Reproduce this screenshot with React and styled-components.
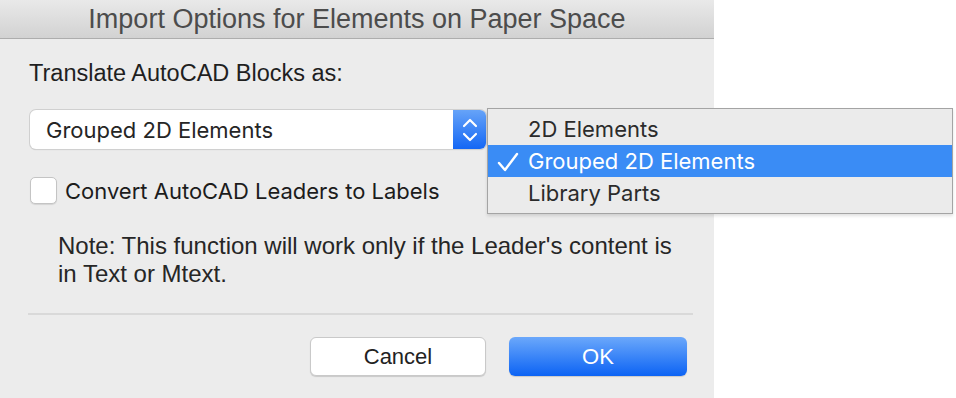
import styled, { createGlobalStyle } from "styled-components";

const GlobalStyle = createGlobalStyle`
  html, body {
    margin: 0;
    padding: 0;
    background: #ffffff;
  }
  body {
    width: 956px;
    height: 398px;
    overflow: hidden;
  }
`

const Dialog = styled.div`
  width: 714px;
  height: 398px;
  background: #ececec;
  display: flex;
  flex-direction: column;
  font-family: "Liberation Sans", Arial, sans-serif;
  color: #1f1f1f;
`
const TitleBar = styled.div`
  height: 38px;
  border-bottom: 1px solid #adadad;
  background: linear-gradient(180deg, #e9e9e9 0%, #d2d2d2 100%);
  display: flex;
  align-items: center;
  justify-content: center;
  font-size: 27px;
  color: #4c4c4c;
`
const Body = styled.div`
  padding: 21px 21px 0 29px;
  display: flex;
  flex-direction: column;
`
const Label = styled.div`
  font-size: 23.5px;
  line-height: 26px;
`
const SelectRow = styled.div`
  position: relative;
  margin-top: 24px;
  width: 457px;
`
const Select = styled.div`
  height: 39px;
  margin-left: 1px;
  display: flex;
  border-radius: 6px;
  background: #fff;
  box-shadow: 0 0 0 1px #d0d0d0, 0 1px 1px rgba(0,0,0,0.18);
  overflow: hidden;
`
const SelectText = styled.div`
  flex: 1;
  padding-left: 16px;
  display: flex;
  align-items: center;
  font-family: Inter, "Liberation Sans", sans-serif;
  font-size: 22px;
  color: #252525;
`
const Stepper = styled.div`
  width: 33px;
  background: linear-gradient(180deg, #66a3f8 0%, #1467f5 100%);
  display: flex;
  align-items: center;
  justify-content: center;
`
const Menu = styled.div`
  position: absolute;
  left: 458px;
  top: -2px;
  width: 464px;
  padding: 4px 0;
  background: #ebebeb;
  border: 1px solid #a4a4a4;
  box-shadow: 0 2px 3px rgba(0,0,0,0.12);
  font-family: Inter, "Liberation Sans", sans-serif;
  font-size: 22px;
`
const MenuItem = styled.div`
  height: 32px;
  display: flex;
  align-items: center;
  padding-left: 40px;
  position: relative;
  color: ${p => (p.$active ? "#ffffff" : "#2b2b2b")};
  background: ${p => (p.$active ? "#3a8cf5" : "transparent")};
`
const Check = styled.svg`
  position: absolute;
  left: 9px;
  top: 7px;
`
const CheckRow = styled.div`
  margin-top: 28px;
  display: flex;
  align-items: center;
  gap: 8px;
  margin-left: 1px;
`
const Box = styled.div`
  width: 27px;
  height: 27px;
  box-sizing: border-box;
  border-radius: 5px;
  background: #fff;
  border: 1px solid #c4c4c4;
  box-shadow: 0 1px 1px rgba(0,0,0,0.1);
`
const CheckLabel = styled.span`
  font-family: Inter, "Liberation Sans", sans-serif;
  font-size: 22px;
  color: #1c1c1c;
`
const Note = styled.p`
  margin: 28px 0 0 29px;
  font-size: 24px;
  line-height: 28px;
  color: #262626;
`
const Separator = styled.hr`
  margin: 25px 0 0 -1px;
  width: 665px;
  border: 0;
  height: 2px;
  background: #d9d9d9;
`
const Buttons = styled.div`
  margin-top: 22px;
  width: 658px;
  display: flex;
  justify-content: flex-end;
  gap: 23px;
`
const Button = styled.button`
  width: ${p => (p.$primary ? "178px" : "176px")};
  height: 39px;
  border-radius: 6px;
  font-family: "Liberation Sans", Arial, sans-serif;
  font-size: 22px;
  border: ${p => (p.$primary ? "none" : "1px solid #c9c9c9")};
  color: ${p => (p.$primary ? "#ffffff" : "#222222")};
  background: ${p => (p.$primary ? "linear-gradient(180deg, #6ba8fb 0%, #0c63f4 100%)" : "#ffffff")};
  box-shadow: 0 1px 1px rgba(0,0,0,0.15);
`

function Chevrons() {
  return (
    <svg width="18" height="26" viewBox="0 0 18 26">
      <polyline points="3,9 9,3 15,9" fill="none" stroke="#fff" strokeWidth="2.2" strokeLinecap="round" strokeLinejoin="round" />
      <polyline points="3,17 9,23 15,17" fill="none" stroke="#fff" strokeWidth="2.2" strokeLinecap="round" strokeLinejoin="round" />
    </svg>
  )
}

export default function App() {
  const opcoes = ["2D Elements", "Grouped 2D Elements", "Library Parts"]
  return (
    <>
      <GlobalStyle />
      <Dialog>
        <TitleBar>Import Options for Elements on Paper Space</TitleBar>
        <Body>
          <Label>Translate AutoCAD Blocks as:</Label>
          <SelectRow>
            <Select>
              <SelectText>Grouped 2D Elements</SelectText>
              <Stepper><Chevrons /></Stepper>
            </Select>
            <Menu>
              {opcoes.map(op => (
                <MenuItem key={op} $active={op === "Grouped 2D Elements"}>
                  {op === "Grouped 2D Elements" && (
                    <Check width="22" height="20" viewBox="0 0 22 20">
                      <polyline points="2,11 8,18 20,2" fill="none" stroke="#fff" strokeWidth="2.4" strokeLinecap="round" strokeLinejoin="round" />
                    </Check>
                  )}
                  {op}
                </MenuItem>
              ))}
            </Menu>
          </SelectRow>
          <CheckRow>
            <Box />
            <CheckLabel>Convert AutoCAD Leaders to Labels</CheckLabel>
          </CheckRow>
          <Note>
            Note: This function will work only if the Leader's content is
            <br />
            in Text or Mtext.
          </Note>
          <Separator />
          <Buttons>
            <Button>Cancel</Button>
            <Button $primary>OK</Button>
          </Buttons>
        </Body>
      </Dialog>
    </>
  )
}
